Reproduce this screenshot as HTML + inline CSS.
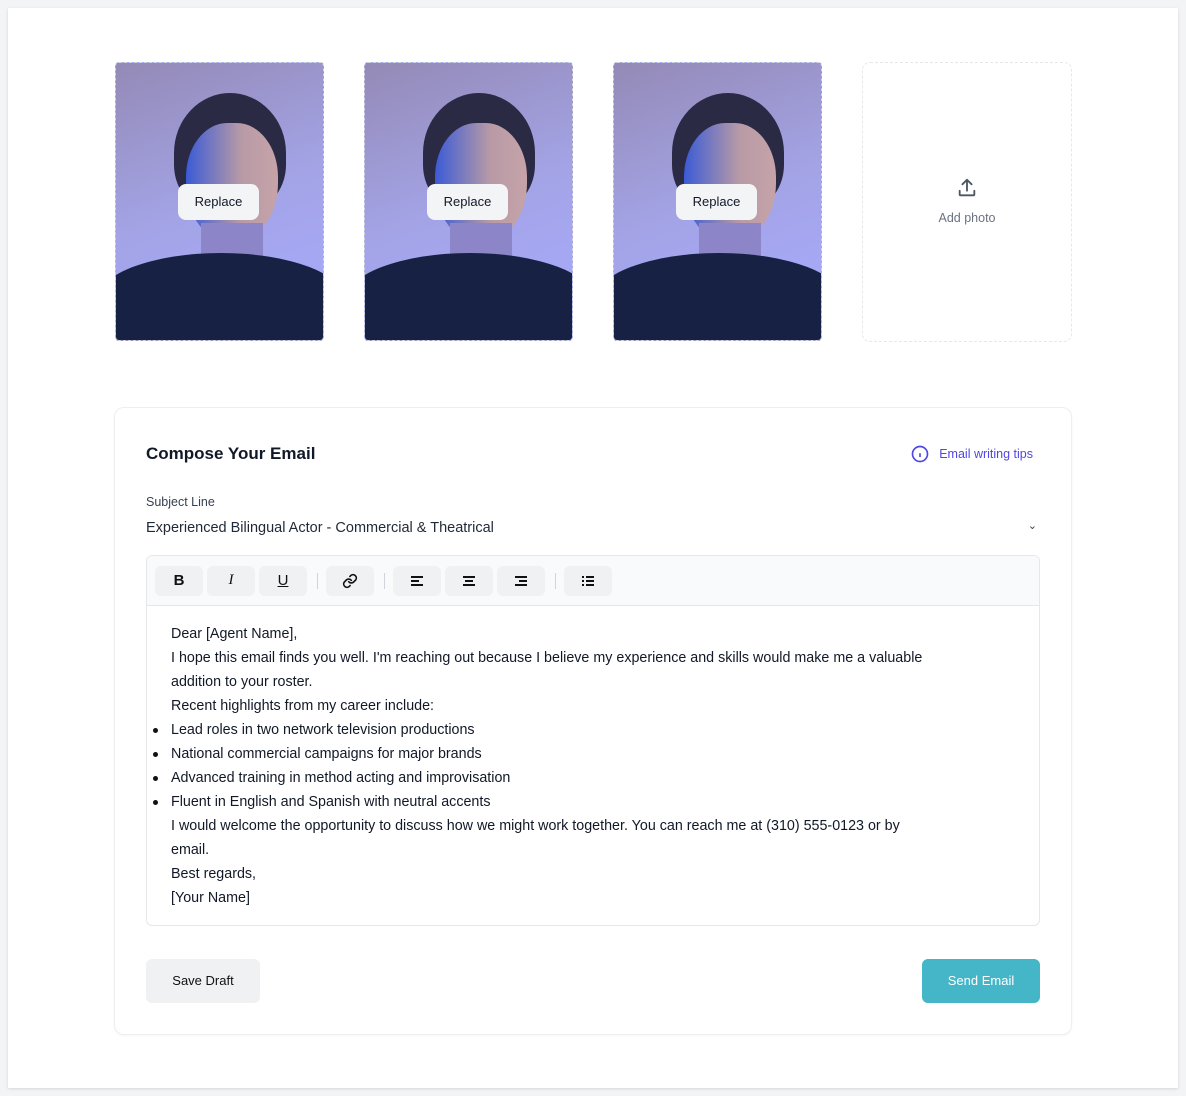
<!DOCTYPE html>
<html><head><style>
*{box-sizing:border-box;margin:0;padding:0}
body{width:1186px;height:1096px;background:#f3f4f6;font-family:"Liberation Sans",sans-serif;color:#111827;position:relative;overflow:hidden}
.page{position:absolute;left:8px;top:8px;width:1170px;height:1080px;background:#fff;box-shadow:0 1px 3px rgba(0,0,0,.12)}
.ph{position:absolute;top:62px;width:209px;height:279px;border:1px dashed #d1d5db;border-radius:4px;overflow:hidden;background:linear-gradient(160deg,#948ab6 0%,#a3a3e6 50%,#a6a8f5 80%)}
.ph .hair{position:absolute;left:58px;top:30px;width:112px;height:120px;border-radius:50% 50% 40% 40%;background:#2a2a45}
.ph .face{position:absolute;left:70px;top:60px;width:92px;height:120px;border-radius:45% 45% 50% 50%;background:linear-gradient(90deg,#3b5bd6,#b89aa6 60%,#c6a3a8)}
.ph .neck{position:absolute;left:85px;top:160px;width:62px;height:50px;background:#8c86c8}
.ph .shirt{position:absolute;left:-20px;top:190px;width:250px;height:120px;border-radius:50% 50% 0 0/40% 40% 0 0;background:#172144}
.rep{position:absolute;left:62px;top:121px;width:81px;height:36px;border-radius:8px;background:#f3f4f6;font-size:13px;text-align:center;line-height:36px;color:#111827}
.add{position:absolute;left:862px;top:62px;width:210px;height:280px;border:1.5px dashed #e5e7eb;border-radius:8px;text-align:center;color:#6b7280;font-size:12.5px}
.card{position:absolute;left:114px;top:407px;width:958px;height:628px;border:1px solid #eceef1;border-radius:10px;background:#fff;box-shadow:0 1px 2px rgba(0,0,0,.04)}
.t{position:absolute;font-size:17px;font-weight:bold;left:31px;top:36px;color:#111827}
.tips{position:absolute;right:38px;top:37px;color:#4f46e5;font-size:12.5px;display:flex;align-items:center;gap:10px}
.lbl{position:absolute;left:31px;top:87px;font-size:12.5px;color:#374151}
.subj{position:absolute;left:31px;top:112px;font-size:14.5px;color:#1f2937}
.chev{position:absolute;right:34px;top:111px;font-size:11px;color:#374151}
.ed{position:absolute;left:31px;top:147px;width:894px;height:371px;border:1px solid #e5e7eb;border-radius:6px;overflow:hidden}
.tb{height:50px;background:#f9fafb;border-bottom:1px solid #e5e7eb;display:flex;align-items:center;padding-left:8px}
.b{width:48px;height:30px;border-radius:6px;background:#f0f1f3;margin-right:4px;display:flex;align-items:center;justify-content:center;font-size:15px;color:#111}
.sep{width:1px;height:16px;background:#d1d5db;margin:0 8px 0 6px}
.body{padding:16px 24px;font-size:14.3px;line-height:24px;color:#111827}
.body li{margin-left:0;list-style:none;position:relative}
.body li:before{content:"";position:absolute;left:-18px;top:10px;width:5px;height:5px;border-radius:50%;background:#111}
.btn{position:absolute;top:551px;height:44px;border-radius:6px;font-size:13px;line-height:44px;text-align:center}
</style></head><body>
<div class="page"></div>
<div class="ph" style="left:115px"><div class="hair"></div><div class="face"></div><div class="neck"></div><div class="shirt"></div><div class="rep">Replace</div></div>
<div class="ph" style="left:364px"><div class="hair"></div><div class="face"></div><div class="neck"></div><div class="shirt"></div><div class="rep">Replace</div></div>
<div class="ph" style="left:613px"><div class="hair"></div><div class="face"></div><div class="neck"></div><div class="shirt"></div><div class="rep">Replace</div></div>
<div class="add"><svg style="position:absolute;left:93px;top:114px" width="22" height="22" viewBox="0 0 24 24" fill="none" stroke="#4b5563" stroke-width="2" stroke-linecap="round" stroke-linejoin="round"><path d="M4 15v4a1 1 0 0 0 1 1h14a1 1 0 0 0 1-1v-4M12 15V3M7 8l5-5 5 5"/></svg><div style="position:absolute;top:148px;width:100%">Add photo</div></div>
<div class="card">
<div class="t">Compose Your Email</div>
<div class="tips"><svg width="18" height="18" viewBox="0 0 24 24" fill="none" stroke="#4f46e5" stroke-width="2.2"><circle cx="12" cy="12" r="10"/><path d="M12 16v-5M12 8h.01"/></svg>Email writing tips</div>
<div class="lbl">Subject Line</div>
<div class="subj">Experienced Bilingual Actor - Commercial &amp; Theatrical</div>
<div class="chev">⌄</div>
<div class="ed">
<div class="tb"><div class="b"><b>B</b></div><div class="b"><i style="font-family:'Liberation Serif'">I</i></div><div class="b"><u>U</u></div><div class="sep"></div><div class="b"><svg width="16" height="16" viewBox="0 0 24 24" fill="none" stroke="#111" stroke-width="2.4" stroke-linecap="round"><path d="M10 13a5 5 0 0 0 7.5.5l3-3a5 5 0 0 0-7-7l-1.7 1.7"/><path d="M14 11a5 5 0 0 0-7.5-.5l-3 3a5 5 0 0 0 7 7l1.7-1.7"/></svg></div><div class="sep"></div>
<div class="b"><svg width="14" height="12" viewBox="0 0 14 12" stroke="#111" stroke-width="2"><path d="M1 2h12M1 6h8M1 10h12"/></svg></div>
<div class="b"><svg width="14" height="12" viewBox="0 0 14 12" stroke="#111" stroke-width="2"><path d="M1 2h12M3 6h8M1 10h12"/></svg></div>
<div class="b"><svg width="14" height="12" viewBox="0 0 14 12" stroke="#111" stroke-width="2"><path d="M1 2h12M5 6h8M1 10h12"/></svg></div><div class="sep"></div>
<div class="b"><svg width="14" height="12" viewBox="0 0 14 12" stroke="#111" stroke-width="2"><path d="M1 2h2M5 2h8M1 6h2M5 6h8M1 10h2M5 10h8"/></svg></div></div>
<div class="body">Dear [Agent Name],<br>I hope this email finds you well. I'm reaching out because I believe my experience and skills would make me a valuable<br>addition to your roster.<br>Recent highlights from my career include:
<ul><li>Lead roles in two network television productions</li><li>National commercial campaigns for major brands</li><li>Advanced training in method acting and improvisation</li><li>Fluent in English and Spanish with neutral accents</li></ul>I would welcome the opportunity to discuss how we might work together. You can reach me at (310) 555-0123 or by<br>email.<br>Best regards,<br>[Your Name]</div>
</div>
<div class="btn" style="left:31px;width:114px;background:#f0f1f3;color:#111">Save Draft</div>
<div class="btn" style="left:807px;width:118px;background:#45b5c8;color:#fff">Send Email</div>
</div>
</body></html>
